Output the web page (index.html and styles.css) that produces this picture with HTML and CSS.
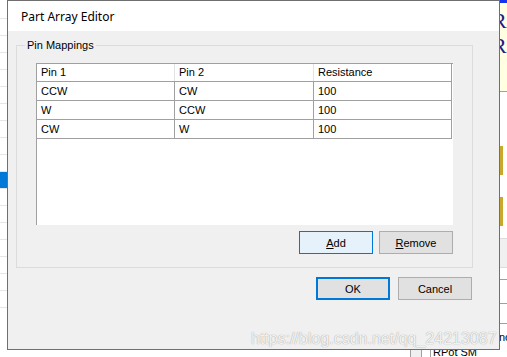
FILE: index.html
```html
<!DOCTYPE html>
<html lang="en">
<head>
<meta charset="utf-8">
<title>Part Array Editor</title>
<link rel="stylesheet" href="styles.css">
</head>
<body>
<div class="desktop">
  <div class="bg-left">
    <div class="bg-row"></div><div class="bg-row"></div><div class="bg-row"></div>
    <div class="bg-row"></div><div class="bg-row"></div><div class="bg-row"></div>
    <div class="bg-row"></div><div class="bg-row"></div><div class="bg-row"></div>
    <div class="bg-row"></div><div class="bg-row sel"></div><div class="bg-row"></div>
    <div class="bg-row"></div><div class="bg-row"></div><div class="bg-row"></div>
    <div class="bg-row"></div><div class="bg-row"></div><div class="bg-row"></div>
  </div>
  <div class="bg-mid">
    <div class="bg-bottom">
      <span class="bg-box"></span>
      <span class="bg-sep"></span>
      <span class="bg-text">RPot SM</span>
    </div>
  </div>
  <div class="bg-right">
    <div class="br-blue"></div>
    <div class="br-yellow">
      <div class="br-r">R</div>
      <div class="br-r">R</div>
    </div>
    <div class="br-white br-h54"></div>
    <div class="br-gold"></div>
    <div class="br-white br-h22"></div>
    <div class="br-gold"></div>
    <div class="br-white br-h12"></div>
    <div class="br-grey"></div>
    <div class="br-cell br-h11"></div>
    <div class="br-cell br-h23"></div>
    <div class="br-cell br-h19"></div>
    <div class="br-text">nc</div>
  </div>
</div>

<div class="dialog">
  <div class="titlebar">Part Array Editor</div>
  <div class="client">
    <div class="group">
      <span class="group-label">Pin Mappings</span>
      <div class="listview">
        <div class="lv-row lv-header">
          <div class="lv-cell">Pin 1</div>
          <div class="lv-cell">Pin 2</div>
          <div class="lv-cell last">Resistance</div>
        </div>
        <div class="lv-row">
          <div class="lv-cell">CCW</div>
          <div class="lv-cell">CW</div>
          <div class="lv-cell">100</div>
        </div>
        <div class="lv-row">
          <div class="lv-cell">W</div>
          <div class="lv-cell">CCW</div>
          <div class="lv-cell">100</div>
        </div>
        <div class="lv-row">
          <div class="lv-cell">CW</div>
          <div class="lv-cell">W</div>
          <div class="lv-cell">100</div>
        </div>
      </div>
      <div class="lv-actions">
        <button class="btn btn-hover"><u>A</u>dd</button>
        <button class="btn"><u>R</u>emove</button>
      </div>
    </div>
    <div class="dlg-actions">
      <button class="btn btn-default">OK</button>
      <button class="btn">Cancel</button>
    </div>
  </div>
</div>

<div class="watermark">https://blog.csdn.net/qq_24213087</div>
</body>
</html>
```

FILE: styles.css
```css
* { box-sizing: border-box; }

html, body {
  margin: 0;
  padding: 0;
}

body {
  width: 507px;
  height: 357px;
  overflow: hidden;
  position: relative;
  background: #ffffff;
  font-family: "Liberation Sans", Arial, sans-serif;
  font-size: 11px;
  color: #000;
}

/* ---------- background application ---------- */
.desktop {
  display: grid;
  grid-template-columns: 7px 493px 7px;
  height: 357px;
}

.bg-left {
  padding-top: 2px;
  background: #fff;
}
.bg-row {
  height: 17px;
  border-bottom: 1px solid #e6e6e6;
}
.bg-row.sel {
  background: #0078d7;
}

.bg-mid {
  display: flex;
  flex-direction: column;
  justify-content: flex-end;
}
.bg-bottom {
  height: 9px;
  overflow: hidden;
  display: flex;
  padding-left: 403px;
}
.bg-box {
  width: 12px;
  border-left: 1px solid #a0a0a0;
  border-right: 1px solid #a0a0a0;
  background: #f0f0f0;
}
.bg-sep {
  width: 1px;
  margin-left: 8px;
  background: #a0a0a0;
}
.bg-text {
  margin-left: 2px;
  line-height: 13px;
  font-size: 11px;
  white-space: nowrap;
  margin-top: -2px;
}

.bg-right {
  display: flex;
  flex-direction: column;
  overflow: hidden;
  background: #fff;
}
.br-blue { height: 3px; background: #1432f0; }
.br-yellow {
  height: 89px;
  background: #ffffe1;
  padding-top: 5px;
  overflow: hidden;
  border-bottom: 1px solid #a0a0a0;
}
.br-r {
  font-family: "Liberation Serif", "Times New Roman", serif;
  font-size: 22px;
  line-height: 25px;
  color: #1c1c8a;
  margin-left: -8px;
}
.br-white { background: #fff; }
.br-h54 { height: 54px; }
.br-h22 { height: 22px; }
.br-h12 { height: 12px; }
.br-gold {
  height: 29px;
  width: 3px;
  background: #c9a82c;
}
.br-grey {
  height: 30px;
  background: #f0f0f0;
  border-top: 1px solid #dcdcdc;
  border-bottom: 1px solid #dcdcdc;
}
.br-cell { border-bottom: 1px solid #a0a0a0; }
.br-h11 { height: 12px; }
.br-h23 { height: 24px; }
.br-h19 { height: 20px; }
.br-text {
  margin-left: -1px;
  margin-top: 7px;
  line-height: 13px;
  white-space: nowrap;
}

/* ---------- dialog window ---------- */
.dialog {
  position: absolute;
  left: 7px;
  top: 0;
  width: 493px;
  height: 350px;
  border: 1px solid #6f6f6f;
  background: #f0f0f0;
  display: flex;
  flex-direction: column;
}

.titlebar {
  height: 30px;
  flex: none;
  background: #ffffff;
  display: flex;
  align-items: center;
  padding-left: 13px;
  font-family: "Noto Sans", "Open Sans", sans-serif;
  font-size: 12px;
  color: #000;
}

.client {
  padding: 14px 26px 0 8px;
}

.group {
  position: relative;
  border: 1px solid #dcdcdc;
  padding: 17px 19px 13px 19px;
}
.group-label {
  position: absolute;
  top: -8px;
  left: 8px;
  padding: 0 2px;
  background: #f0f0f0;
  line-height: 14px;
  font-size: 11px;
}

.listview {
  width: 417px;
  height: 162px;
  background: #fff;
  border-left: 1px solid #a0a0a0;
  border-top: 1px solid #a0a0a0;
}
.lv-row {
  display: grid;
  grid-template-columns: 138px 139px 138px;
  width: 415px;
  height: 19px;
  border-bottom: 1px solid #a0a0a0;
}
.lv-header {
  height: 18px;
}
.lv-cell {
  padding-left: 4px;
  line-height: 18px;
  border-right: 1px solid #a0a0a0;
  white-space: nowrap;
  overflow: hidden;
}
.lv-header .lv-cell {
  line-height: 17px;
  border-right-color: #e3e3e3;
}
.lv-header .lv-cell.last {
  border-right-color: #a0a0a0;
}

.lv-actions {
  display: flex;
  justify-content: flex-end;
  gap: 6px;
  margin-top: 6px;
}

.dlg-actions {
  display: flex;
  justify-content: flex-end;
  gap: 8px;
  margin-top: 9px;
  padding-right: 1px;
}

.btn {
  width: 74px;
  height: 23px;
  padding: 0;
  margin: 0;
  border: 1px solid #adadad;
  background: #e1e1e1;
  font-family: "Liberation Sans", Arial, sans-serif;
  font-size: 11px;
  color: #000;
  display: flex;
  align-items: center;
  justify-content: center;
}
.btn u { text-underline-offset: 1px; }
.btn-hover {
  border-color: #0078d7;
  background: #e5f1fb;
}
.btn-default {
  border: 2px solid #0078d7;
}

/* ---------- watermark ---------- */
.watermark {
  position: absolute;
  left: 251px;
  top: 330px;
  font-family: "Liberation Sans", Arial, sans-serif;
  font-size: 16px;
  line-height: 18px;
  white-space: nowrap;
  color: rgba(255, 255, 255, 0.9);
  text-shadow: 0 0 1px rgba(0, 0, 0, 0.45);
}
```
